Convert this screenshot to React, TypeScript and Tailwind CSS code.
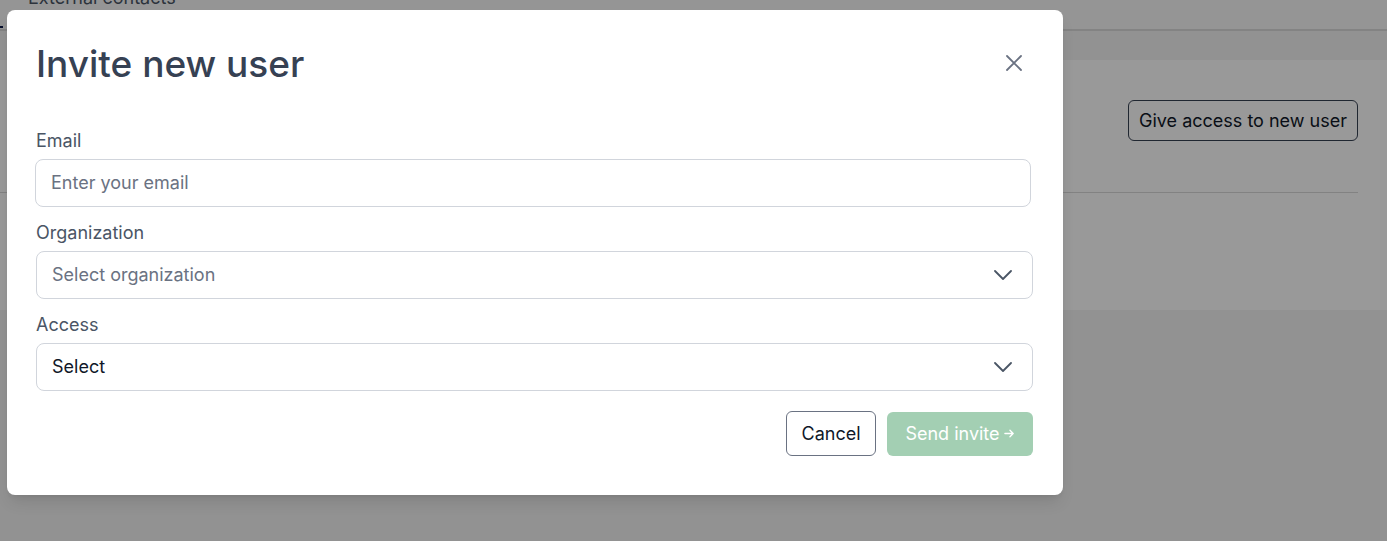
import React from "react";

function Chevron() {
  return (
    <svg width="18" height="10" viewBox="0 0 18 10" fill="none" className="text-gray-600">
      <path d="M1 1l8 8 8-8" stroke="currentColor" strokeWidth="1.8" strokeLinecap="round" strokeLinejoin="round" />
    </svg>
  );
}

export default function App() {
  return (
    <div className="relative h-[541px] w-[1387px] overflow-hidden bg-[#f3f3f3] font-['Inter',sans-serif]">
      {/* underlying page */}
      <div className="flex h-[31px] items-start border-b-2 border-[#dadada] bg-[#f9f9f9]">
        <div className="mt-[26px] h-[2px] w-[3px] bg-[#0b1a4a]" />
        <span className="-mt-[16px] ml-[25px] text-lg text-gray-600">External contacts</span>
      </div>
      <div className="h-[29px] bg-[#f3f3f3]" />
      <div className="flex h-[250px] flex-col bg-white pr-[29px]">
        <div className="flex h-[133px] items-start justify-end border-b border-[#d9d9d9] pt-[40px]">
          <button className="h-[41px] rounded-md border border-gray-700 px-[10px] text-lg text-gray-900">
            Give access to new user
          </button>
        </div>
      </div>

      {/* overlay */}
      <div className="absolute inset-0 bg-black/40" />

      {/* modal */}
      <div className="absolute left-[7px] top-[10px] flex h-[485px] w-[1056px] flex-col rounded-lg bg-white pl-[29px] pr-[30px] shadow-lg">
        <div className="flex items-start justify-between pt-[32px]">
          <h2 className="text-[37px] font-medium leading-[44px] text-gray-700">Invite new user</h2>
          <button className="mr-[10px] mt-[12px] text-gray-500">
            <svg width="18" height="18" viewBox="0 0 18 18" fill="none">
              <path d="M2 2l14 14M16 2L2 16" stroke="currentColor" strokeWidth="1.8" strokeLinecap="round" />
            </svg>
          </button>
        </div>

        <div className="mt-[41px] flex flex-col">
          <label className="text-lg leading-[28px] text-gray-600">Email</label>
          <div className="mt-[4px] -ml-[1px] mr-[2px] flex h-[48px] items-center rounded-lg border border-gray-300 px-[15px] text-lg text-gray-500">
            Enter your email
          </div>

          <label className="mt-[12px] text-lg leading-[28px] text-gray-600">Organization</label>
          <div className="mt-[4px] flex h-[48px] items-center justify-between rounded-lg border border-gray-300 pl-[15px] pr-[20px] text-lg text-gray-500">
            <span>Select organization</span>
            <Chevron />
          </div>

          <label className="mt-[12px] text-lg leading-[28px] text-gray-600">Access</label>
          <div className="mt-[4px] flex h-[48px] items-center justify-between rounded-lg border border-gray-300 pl-[15px] pr-[20px] text-lg text-gray-900">
            <span>Select</span>
            <Chevron />
          </div>
        </div>

        <div className="mt-[20px] flex items-center justify-end gap-[11px]">
          <button className="h-[45px] w-[90px] rounded-md border border-gray-500 text-lg text-gray-900">Cancel</button>
          <button className="flex h-[44px] w-[146px] items-center justify-center gap-[4px] rounded-md bg-[#a3cfb3] text-lg text-white">
            Send invite
            <svg width="11" height="11" viewBox="0 0 12 12" fill="none">
              <path d="M1 6h9M6.5 2.5L10 6l-3.5 3.5" stroke="currentColor" strokeWidth="1.5" strokeLinecap="round" strokeLinejoin="round" />
            </svg>
          </button>
        </div>
      </div>
    </div>
  );
}
